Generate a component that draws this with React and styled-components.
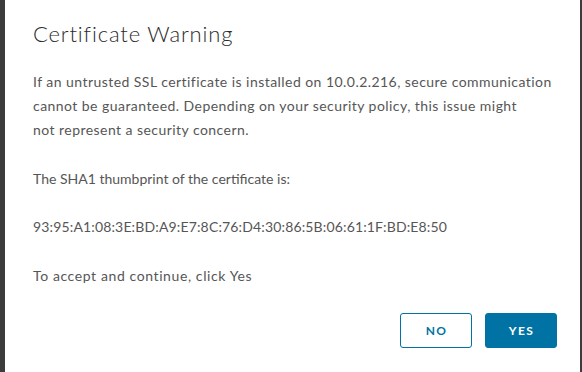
import React from 'react';
import styled, {createGlobalStyle} from 'styled-components';

const Global = createGlobalStyle`
  html, body {
    margin: 0;
    padding: 0;
    background: #ffffff;
  }
  * { box-sizing: border-box; }
`;

const Screen = styled.div`
  display: flex;
  width: 582px;
  height: 372px;
  overflow: hidden;
`;

const Backdrop = styled.div`
  width: ${(p) => p.$w}px;
  flex: none;
  background: #3c3c3c;
`;

const Dialog = styled.div`
  flex: 1;
  background: #ffffff;
  display: flex;
  flex-direction: column;
  padding: 20px 23px 0 28px;
  font-family: Lato, "Open Sans", sans-serif;
`;

const Title = styled.h3`
  margin: 0 0 22px;
  font-size: 22px;
  line-height: 28px;
  font-weight: 300;
  color: #2b2b2b;
  letter-spacing: 0.85px;
`;

const Body = styled.div`
  color: #565656;
  font-size: 14px;
  line-height: 24px;
`;

const Para = styled.p`
  margin: 0 0 24.5px;
  letter-spacing: ${(p) => p.$ls ?? 0.3}px;
  white-space: nowrap;
`;

const Footer = styled.div`
  display: flex;
  justify-content: flex-end;
  gap: 13px;
  margin-top: 1px;
`;

const Button = styled.button`
  width: 72px;
  height: 35px;
  border-radius: 3px;
  border: 1px solid #0072a3;
  background: ${(p) => (p.$primary ? '#0072a3' : '#ffffff')};
  color: ${(p) => (p.$primary ? '#ffffff' : '#0072a3')};
  font-family: Lato, "Open Sans", sans-serif;
  font-size: 12px;
  font-weight: 700;
  letter-spacing: 1.4px;
  text-transform: uppercase;
  padding: 0 0 0 1px;
`;

export default function App() {
  return (
    <Screen>
      <Global />
      <Backdrop $w={5} />
      <Dialog>
        <Title>Certificate Warning</Title>
        <Body>
          <Para $ls={0.45}>
            If an untrusted SSL certificate is installed on 10.0.2.216, secure communication<br />
            cannot be guaranteed. Depending on your security policy, this issue might<br />
            not represent a security concern.
          </Para>
          <Para $ls={0}>The SHA1 thumbprint of the certificate is:</Para>
          <Para $ls={0.15}>93:95:A1:08:3E:BD:A9:E7:8C:76:D4:30:86:5B:06:61:1F:BD:E8:50</Para>
          <Para $ls={0.6}>To accept and continue, click Yes</Para>
        </Body>
        <Footer>
          <Button>No</Button>
          <Button $primary>Yes</Button>
        </Footer>
      </Dialog>
      <Backdrop $w={2} />
    </Screen>
  );
}
